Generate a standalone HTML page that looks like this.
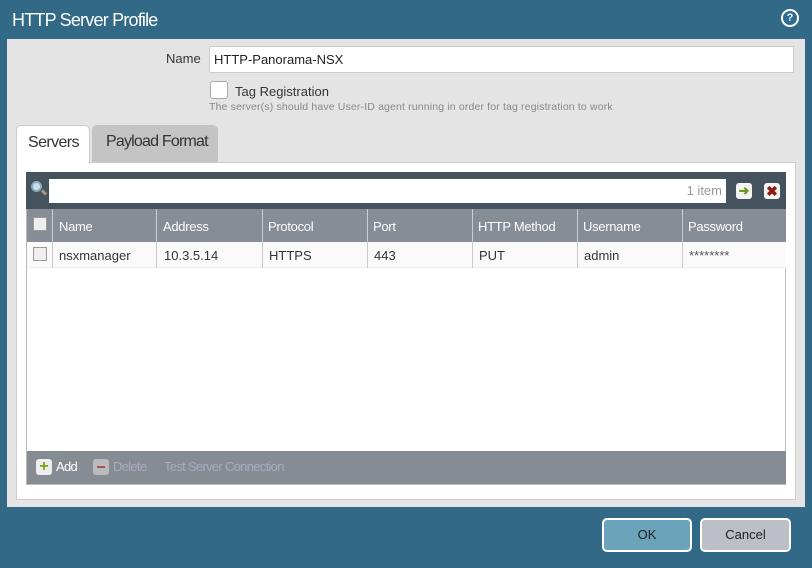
<!DOCTYPE html>
<html><head><style>
*{box-sizing:border-box;margin:0;padding:0}
body{width:812px;height:568px;background:#326986;font-family:"Liberation Sans",sans-serif;position:relative;overflow:hidden;font-size:13px}
.a{position:absolute;white-space:nowrap}
.hd{color:#fff;font-size:13px;top:219px;letter-spacing:-0.3px}
.cell{font-size:13px;color:#333;top:248px}
</style></head><body>
<div class="a" style="left:12px;top:10px;color:#fff;font-size:18px;letter-spacing:-0.8px">HTTP Server Profile</div>
<div class="a" style="left:781px;top:9px;width:18px;height:18px;border-radius:50%;background:#fff;"><div class="a" style="left:2px;top:2px;width:14px;height:14px;border-radius:50%;background:#2d6b93;color:#fff;font-size:11px;font-weight:bold;text-align:center;line-height:14px">?</div></div>
<div class="a" style="left:7px;top:39px;width:798px;height:468px;background:#e4e4e4"></div>
<div class="a" style="left:166px;top:51px;font-size:13px;color:#333">Name</div>
<div class="a" style="left:209px;top:46px;width:585px;height:27px;background:#fff;border:1px solid #ccc;padding:5px 4px;color:#222;font-size:13px">HTTP-Panorama-NSX</div>
<div class="a" style="left:210px;top:81px;width:18px;height:18px;background:#fff;border:1px solid #aaa;border-radius:3px"></div>
<div class="a" style="left:235px;top:84px;font-size:13px;color:#333">Tag Registration</div>
<div class="a" style="left:209px;top:101px;font-size:10.5px;color:#888;letter-spacing:0.15px">The server(s) should have User-ID agent running in order for tag registration to work</div>
<div class="a" style="left:16px;top:125px;width:74px;height:39px;background:#fff;border:1px solid #ccc;border-bottom:none;border-radius:5px 5px 0 0;font-size:16px;color:#333;padding:8px 11px;z-index:2;letter-spacing:-0.6px">Servers</div>
<div class="a" style="left:92px;top:125px;width:126px;height:37px;background:#c4c4c4;border-radius:5px 5px 0 0;font-size:16px;color:#333;padding:8px 14px;letter-spacing:-0.8px">Payload Format</div>
<div class="a" style="left:16px;top:162px;width:780px;height:338px;background:#fff;border:1px solid #ccc"></div>
<div class="a" style="left:26px;top:172px;width:760px;height:313px;background:#fff;border:1px solid #bbb"></div>
<div class="a" style="left:26px;top:172px;width:760px;height:37px;background:#44535d"></div>
<div class="a" style="left:31px;top:181px;width:11px;height:11px;border-radius:50%;border:2px solid #8ab;background:#cde"></div>
<div class="a" style="left:41px;top:191px;width:6px;height:3px;background:#a97;transform:rotate(45deg)"></div>
<div class="a" style="left:49px;top:179px;width:677px;height:24px;background:#fff;text-align:right;padding:4px 4px;color:#999;font-size:13px">1 item</div>
<div class="a" style="left:736px;top:183px;width:16px;height:16px;background:#f4f4f4;border-radius:3px;color:#6a9a1a;font-weight:bold;font-size:13px;text-align:center;line-height:16px">➜</div>
<div class="a" style="left:764px;top:183px;width:16px;height:16px;background:#f4f4f4;border-radius:3px;color:#8a1a10;font-weight:bold;font-size:14px;text-align:center;line-height:16px">✖</div>
<div class="a" style="left:27px;top:209px;width:759px;height:33px;background:#868d94"></div>
<div class="a" style="left:27px;top:242px;width:759px;height:26px;background:#fafafa;border-bottom:1px solid #eee"></div>
<div class="a" style="left:33px;top:217px;width:14px;height:14px;background:#eee;border:1px solid #999"></div>
<div class="a" style="left:33px;top:247px;width:14px;height:14px;background:#eee;border:1px solid #999"></div>
<div class="a" style="left:52px;top:209px;width:1px;height:59px;background:#ccc"></div>
<div class="a" style="left:156px;top:209px;width:1px;height:59px;background:#ccc"></div>
<div class="a" style="left:262px;top:209px;width:1px;height:59px;background:#ccc"></div>
<div class="a" style="left:367px;top:209px;width:1px;height:59px;background:#ccc"></div>
<div class="a" style="left:472px;top:209px;width:1px;height:59px;background:#ccc"></div>
<div class="a" style="left:577px;top:209px;width:1px;height:59px;background:#ccc"></div>
<div class="a" style="left:682px;top:209px;width:1px;height:59px;background:#ccc"></div>
<div class="a hd" style="left:59px">Name</div><div class="a hd" style="left:163px">Address</div><div class="a hd" style="left:268px">Protocol</div><div class="a hd" style="left:373px">Port</div><div class="a hd" style="left:478px">HTTP Method</div><div class="a hd" style="left:583px">Username</div><div class="a hd" style="left:688px">Password</div>
<div class="a cell" style="left:59px">nsxmanager</div><div class="a cell" style="left:164px">10.3.5.14</div><div class="a cell" style="left:269px">HTTPS</div><div class="a cell" style="left:374px">443</div><div class="a cell" style="left:479px">PUT</div><div class="a cell" style="left:584px">admin</div><div class="a cell" style="left:689px;color:#555">********</div>
<div class="a" style="left:27px;top:451px;width:759px;height:33px;background:#868c93"></div>
<div class="a" style="left:36px;top:459px;width:16px;height:16px;background:#eee;border-radius:3px;color:#7aa31a;font-weight:bold;font-size:16px;line-height:16px;text-align:center">+</div>
<div class="a" style="left:56px;top:459px;color:#fff;font-size:13px;letter-spacing:-0.7px">Add</div>
<div class="a" style="left:93px;top:459px;width:16px;height:16px;background:#bbb;border-radius:3px"><div class="a" style="left:4px;top:7px;width:8px;height:2px;background:#a55"></div></div>
<div class="a" style="left:113px;top:459px;color:#aab;font-size:13px;letter-spacing:-0.7px">Delete</div>
<div class="a" style="left:164px;top:459px;color:#aab;font-size:13px;letter-spacing:-0.7px">Test Server Connection</div>
<div class="a" style="left:602px;top:518px;width:90px;height:34px;background:#6aa3ba;border:2px solid #fff;border-radius:5px;text-align:center;line-height:30px;color:#222">OK</div>
<div class="a" style="left:700px;top:518px;width:91px;height:34px;background:#bdbfc6;border:2px solid #fff;border-radius:5px;text-align:center;line-height:30px;color:#222">Cancel</div>
</body></html>
